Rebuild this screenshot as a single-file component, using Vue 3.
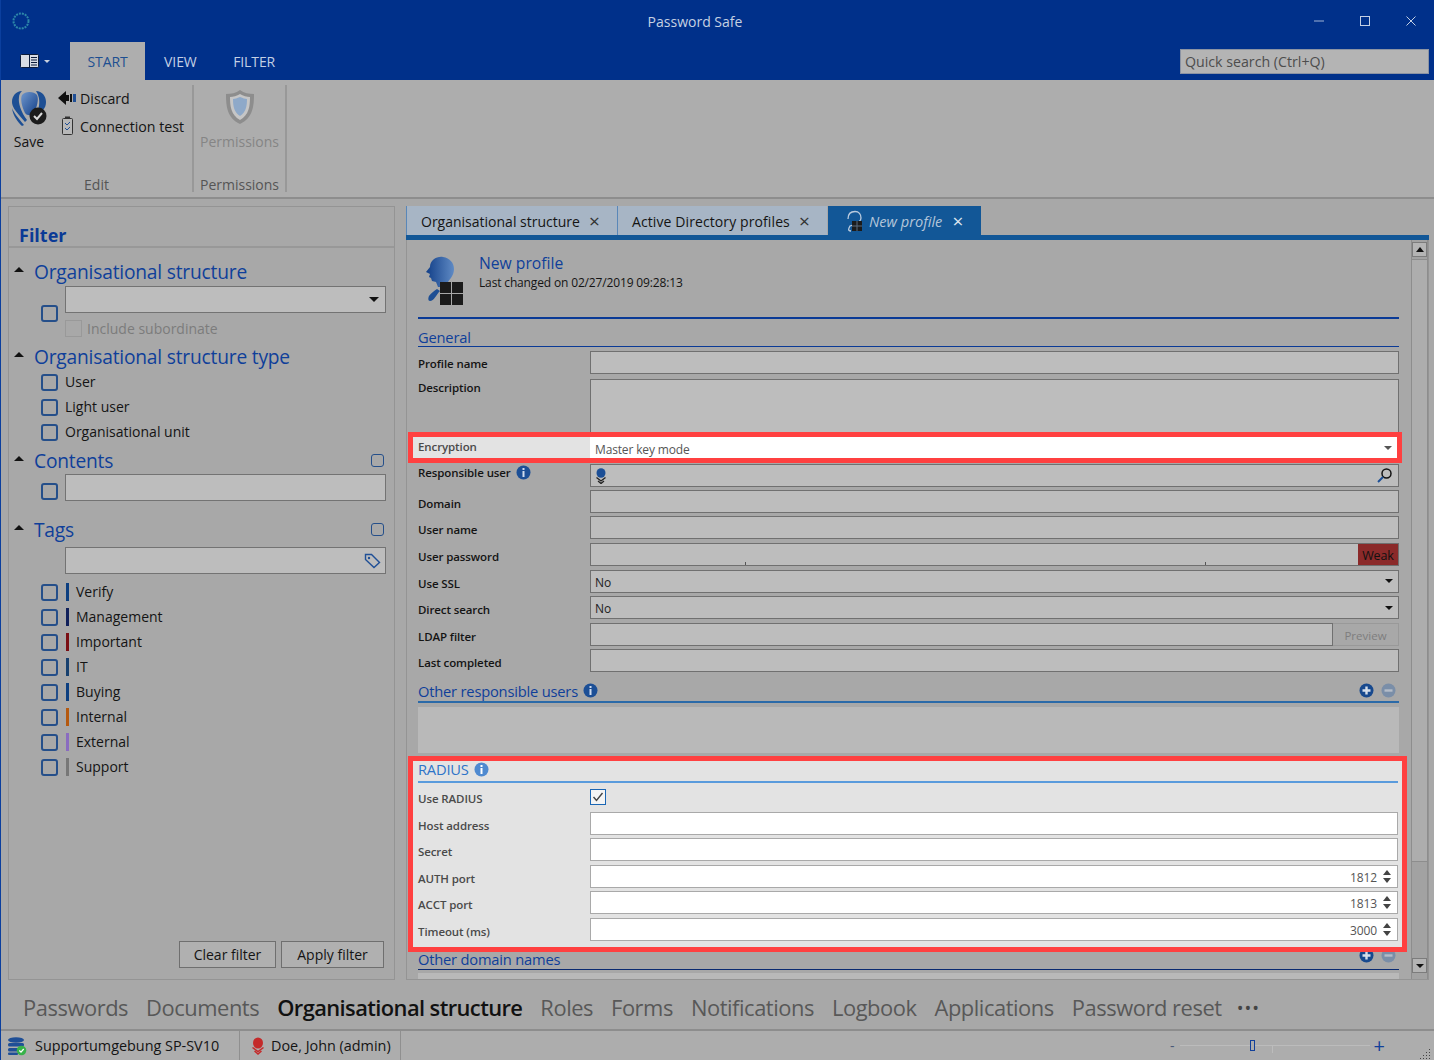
<script setup>
// donnees des listes du filtre et du formulaire
const typeList = ["User", "Light user", "Organisational unit"]
const tags = [
  { nom: "Verify", couleur: "#0d3f80" },
  { nom: "Management", couleur: "#10205a" },
  { nom: "Important", couleur: "#7a0f14" },
  { nom: "IT", couleur: "#17406e" },
  { nom: "Buying", couleur: "#0d3f80" },
  { nom: "Internal", couleur: "#b5590f" },
  { nom: "External", couleur: "#8a6cc0" },
  { nom: "Support", couleur: "#777777" }
]
const navItems = ["Passwords", "Documents", "Organisational structure", "Roles", "Forms", "Notifications", "Logbook", "Applications", "Password reset"]
const ports = [
  { label: "AUTH port", val: "1812" },
  { label: "ACCT port", val: "1813" },
  { label: "Timeout (ms)", val: "3000" }
]
</script>

<template>
  <div class="app">
    <div class="titlebar">
      <div class="logo">
        <svg width="20" height="20" viewBox="0 0 20 20"><circle cx="10" cy="10" r="7.5" fill="none" stroke="#2c86a8" stroke-width="2" stroke-dasharray="2 1"/></svg>
      </div>
      <div class="wintitle">Password Safe</div>
      <div class="winctrl">
        <span class="wbtn"><svg width="12" height="12" viewBox="0 0 12 12"><path d="M1 6h10" stroke="#9fb2d4" fill="none"/></svg></span>
        <span class="wbtn"><svg width="12" height="12" viewBox="0 0 12 12"><rect x="1.5" y="1.5" width="9" height="9" stroke="#c3cfe4" fill="none"/></svg></span>
        <span class="wbtn"><svg width="12" height="12" viewBox="0 0 12 12"><path d="M1.5 1.5l9 9M10.5 1.5l-9 9" stroke="#c3cfe4" fill="none"/></svg></span>
      </div>
    </div>

    <div class="tabrow">
      <div class="appmenu">
        <svg width="20" height="14" viewBox="0 0 20 14"><rect x="0.5" y="0.5" width="18" height="13" rx="1" fill="#d8dce4" stroke="#0b1b3a"/><path d="M9.5 1v12" stroke="#0b1b3a"/><path d="M11 3.5h6M11 6h6M11 8.500h6M11 11h6" stroke="#0b1b3a"/></svg>
        <span class="menu-caret"></span>
      </div>
      <div class="rtab active">START</div>
      <div class="rtab">VIEW</div>
      <div class="rtab">FILTER</div>
      <div class="quick">Quick search (Ctrl+Q)</div>
    </div>

    <div class="ribbon">
      <div class="rgroup edit">
        <div class="rgroup-body">
          <div class="bigbtn">
            <svg width="38" height="40" viewBox="0 0 38 40">
              <defs><linearGradient id="g1" x1="0" y1="0" x2="1" y2="1"><stop offset="0" stop-color="#6f96cc"/><stop offset="1" stop-color="#123f88"/></linearGradient></defs>
              <path d="M12 2C6 2 2 7 2 13c0 5 4 9 7 13l6 7 2-2c-6-8-9-17-8-23 0-2 1-4 3-6z" fill="#1d4f94"/>
              <path d="M2 19c2 5 6 10 12 17l-2 1C8 33 3 27 2 19z" fill="#1d4f94"/>
              <path d="M26 2c6 0 10 5 10 11 0 3-1 6-3 8h-5c2-6 2-13-2-19z" fill="#1d4f94"/>
              <path d="M12 6c3-4 12-4 15 0 2 4 0 12-3 18-2 3-7 3-9 0-3-6-5-14-3-18z" fill="url(#g1)"/>
              <circle cx="28" cy="27" r="8.500" fill="#1b1b1b"/>
              <path d="M24 27l3 3 5-6" stroke="#d8d8d8" stroke-width="2" fill="none"/>
            </svg>
            <span class="bigtxt">Save</span>
          </div>
          <div class="smallcol">
            <div class="smallbtn">
              <svg width="19" height="16" viewBox="0 0 19 16"><path d="M0 8l8-7v4h3v6H8v4z" fill="#111"/><rect x="12" y="4" width="2" height="8" fill="#111"/><rect x="15" y="4" width="3" height="8" fill="#1f4f96"/></svg>
              <span>Discard</span>
            </div>
            <div class="smallbtn">
              <svg width="19" height="20" viewBox="0 0 19 20"><rect x="4.500" y="2.500" width="10" height="16" rx="1" fill="#b8b8b8" stroke="#333"/><path d="M7 1.500h5" stroke="#333" stroke-width="2"/><path d="M7 7l2 2 3-3M7 12l2 2 3-3" stroke="#1f4f96" fill="none"/></svg>
              <span>Connection test</span>
            </div>
          </div>
        </div>
        <div class="rgroup-label">Edit</div>
      </div>
      <div class="rgroup perm">
        <div class="rgroup-body center">
          <div class="bigbtn dis">
            <svg width="32" height="38" viewBox="0 0 32 38"><path d="M16 2c4 3 9 4 14 4 0 12-1 24-14 30C3 30 2 18 2 6c5 0 10-1 14-4z" fill="#8d8d8d"/><path d="M16 6c3 2 7 3 10 3 0 9-1 18-10 23C7 27 6 18 6 9c3 0 7-1 10-3z" fill="#c6c6c6"/><path d="M16 9c3 1 5 2 7 2 0 7-1 13-7 17-6-4-7-10-7-17 2 0 4-1 7-2z" fill="#8ea9c9"/></svg>
            <span class="bigtxt">Permissions</span>
          </div>
        </div>
        <div class="rgroup-label">Permissions</div>
      </div>
    </div>

    <div class="middle">
      <aside class="filter">
        <div class="filter-title">Filter</div>

        <div class="fhead first"><span class="up"></span><span>Organisational structure</span></div>
        <div class="forg">
          <span class="cb big"></span>
          <div class="forg-col">
            <div class="finput"><span class="flex1"></span><span class="caret black"></span></div>
            <div class="incl"><span class="cb dis"></span><span>Include subordinate</span></div>
          </div>
        </div>

        <div class="fhead type"><span class="up"></span><span>Organisational structure type</span></div>
        <div v-for="t in typeList" :key="t" class="fitem"><span class="cb"></span><span>{{ t }}</span></div>

        <div class="fhead contents"><span class="up"></span><span class="flex1">Contents</span><span class="cb small"></span></div>
        <div class="fline"><span class="cb"></span><div class="finput"></div></div>

        <div class="fhead tagshead"><span class="up"></span><span class="flex1">Tags</span><span class="cb small"></span></div>
        <div class="tagbox">
          <div class="finput">
            <span class="flex1"></span>
            <svg width="17" height="16" viewBox="0 0 17 16"><path d="M1.500 1.500h6l8 8-5.500 5-8.500-8z" fill="none" stroke="#1f4f96" stroke-width="1.400"/><circle cx="5" cy="5" r="1.200" fill="#1f4f96"/></svg>
          </div>
        </div>
        <div v-for="t in tags" :key="t.nom" class="fitem">
          <span class="cb"></span>
          <span class="tagbar" :style="{ background: t.couleur }"></span>
          <span>{{ t.nom }}</span>
        </div>

        <div class="flex1"></div>
        <div class="fbtns">
          <div class="btn clear">Clear filter</div>
          <div class="btn apply">Apply filter</div>
        </div>
      </aside>

      <section class="main">
        <div class="doctabs">
          <div class="dtab one"><span>Organisational structure</span><span class="x">×</span></div>
          <div class="dtab two"><span>Active Directory profiles</span><span class="x">×</span></div>
          <div class="dtab cur">
            <svg width="18" height="22" viewBox="0 0 18 22"><path d="M3 9C3 4 6 1.500 10 1.500s6 3 6 6.500c0 2-1 3-2 4H8v3l-3 1-1 2c-1 2 0 3 2 3" fill="none" stroke="#b9cade" stroke-width="1.300"/><rect x="7" y="11" width="10" height="10" fill="#1b1b1b"/><path d="M12 11v10M7 16h10" stroke="#5b6b7c"/></svg>
            <span>New profile</span><span class="x">×</span>
          </div>
        </div>
        <div class="docbar"></div>

        <div class="docbody">
          <div class="form">
            <div class="phead">
              <svg class="picon" width="42" height="52" viewBox="0 0 42 52">
                <defs><linearGradient id="g2" x1="0" y1="0" x2="1" y2="0"><stop offset="0" stop-color="#123f88"/><stop offset="1" stop-color="#5f8ac4"/></linearGradient></defs>
                <path d="M6 12C6 5 13 1 19 2c7 1 11 6 11 12 0 6-4 10-6 13l-1 5h-9l-2-5-4-1-1-3-2-1 1-3-4-2z" fill="url(#g2)"/>
                <path d="M13 34l3 2c-4 4-6 10-10 10-2 0-2-3-1-5 2-3 5-5 8-7z" fill="#1e4f94"/>
                <rect x="16" y="27" width="11" height="11" fill="#1b1b1b"/><rect x="28" y="27" width="11" height="11" fill="#1b1b1b"/>
                <rect x="16" y="39" width="11" height="11" fill="#1b1b1b"/><rect x="28" y="39" width="11" height="11" fill="#1b1b1b"/>
              </svg>
              <div>
                <div class="ptitle">New profile</div>
                <div class="psub">Last changed on 02/27/2019 09:28:13</div>
              </div>
            </div>

            <div class="sect general"><span>General</span></div>
            <div class="row first"><label>Profile name</label><div class="inp"></div></div>
            <div class="row desc"><label>Description</label><div class="inp"></div></div>

            <div class="hl hl-enc">
              <div class="row enc"><label>Encryption</label><div class="inp white noborder"><span class="flex1">Master key mode</span><span class="caret grey"></span></div></div>
            </div>

            <div class="row resp">
              <label>Responsible user <svg class="info" width="15" height="15" viewBox="0 0 15 15"><circle cx="7.500" cy="7.500" r="7" fill="#1c4f96"/><rect x="6.500" y="3" width="2" height="2" fill="#cfdcee"/><rect x="6.500" y="6" width="2" height="6" fill="#cfdcee"/></svg></label>
              <div class="inp">
                <svg width="12" height="16" viewBox="0 0 12 16"><ellipse cx="6" cy="5" rx="4.500" ry="4.800" fill="#1c4f96"/><path d="M1.500 9.500L6 13l4.500-3.500M3 13l3 2.500L9 13" stroke="#222" stroke-width="1.300" fill="none"/></svg>
                <span class="flex1"></span>
                <svg width="17" height="17" viewBox="0 0 17 17"><circle cx="10.500" cy="6.500" r="4.500" fill="none" stroke="#111" stroke-width="1.500"/><path d="M7 10l-5 5" stroke="#1c4f96" stroke-width="2"/></svg>
              </div>
            </div>
            <div class="row"><label>Domain</label><div class="inp"></div></div>
            <div class="row"><label>User name</label><div class="inp"></div></div>
            <div class="row"><label>User password</label>
              <div class="inp pwd"><span class="tick t1"></span><span class="tick t2"></span><span class="flex1"></span><span class="weak">Weak</span></div>
            </div>
            <div class="row"><label>Use SSL</label><div class="inp"><span class="flex1">No</span><span class="caret black"></span></div></div>
            <div class="row"><label>Direct search</label><div class="inp"><span class="flex1">No</span><span class="caret black"></span></div></div>
            <div class="row"><label>LDAP filter</label><div class="ldap"><div class="inp grow"></div><div class="preview">Preview</div></div></div>
            <div class="row"><label>Last completed</label><div class="inp"></div></div>

            <div class="sect other">
              <span>Other responsible users</span>
              <svg class="info" width="15" height="15" viewBox="0 0 15 15"><circle cx="7.500" cy="7.500" r="7" fill="#1c4f96"/><rect x="6.500" y="3" width="2" height="2" fill="#cfdcee"/><rect x="6.500" y="6" width="2" height="6" fill="#cfdcee"/></svg>
              <span class="flex1"></span>
              <svg class="pm" width="15" height="15" viewBox="0 0 15 15"><circle cx="7.500" cy="7.500" r="7" fill="#17498e"/><path d="M3.500 7.500h8M7.500 3.500v8" stroke="#d5deea" stroke-width="2.400"/></svg>
              <svg class="pm" width="15" height="15" viewBox="0 0 15 15"><circle cx="7.500" cy="7.500" r="7" fill="#7a8ea8"/><path d="M3.500 7.500h8" stroke="#b4bcc8" stroke-width="2.400"/></svg>
            </div>
            <div class="listbox"></div>

            <div class="hl hl-radius">
              <div class="sect radius">
                <span>RADIUS</span>
                <svg class="info" width="15" height="15" viewBox="0 0 15 15"><circle cx="7.500" cy="7.500" r="7" fill="#4f8ad0"/><rect x="6.500" y="3" width="2" height="2" fill="#fff"/><rect x="6.500" y="6" width="2" height="6" fill="#fff"/></svg>
              </div>
              <div class="row light"><label>Use RADIUS</label>
                <div class="checked"><svg width="14" height="14" viewBox="0 0 14 14"><path d="M2.500 7l3 3.500 6-7.500" stroke="#444" stroke-width="1.400" fill="none"/></svg></div>
              </div>
              <div class="row light"><label>Host address</label><div class="inp white"></div></div>
              <div class="row light"><label>Secret</label><div class="inp white"></div></div>
              <div v-for="p in ports" :key="p.label" class="row light">
                <label>{{ p.label }}</label>
                <div class="inp white">
                  <span class="flex1 num">{{ p.val }}</span>
                  <span class="spin"><span class="sup"></span><span class="sdown"></span></span>
                </div>
              </div>
            </div>

            <div class="sect domains">
              <span>Other domain names</span>
              <span class="flex1"></span>
              <svg class="pm" width="15" height="15" viewBox="0 0 15 15"><circle cx="7.500" cy="7.500" r="7" fill="#17498e"/><path d="M3.500 7.500h8M7.500 3.500v8" stroke="#d5deea" stroke-width="2.400"/></svg>
              <svg class="pm" width="15" height="15" viewBox="0 0 15 15"><circle cx="7.500" cy="7.500" r="7" fill="#7a8ea8"/><path d="M3.500 7.500h8" stroke="#b4bcc8" stroke-width="2.400"/></svg>
            </div>
            <div class="listbox last"></div>
          </div>

          <div class="scroll">
            <div class="sbtn"><span class="up"></span></div>
            <div class="thumb"></div>
            <div class="flex1"></div>
            <div class="sbtn"><span class="caret black"></span></div>
          </div>
        </div>
      </section>
    </div>

    <nav class="bottomnav">
      <span v-for="n in navItems" :key="n" :class="{ on: n === 'Organisational structure' }">{{ n }}</span>
      <span class="dots">•••</span>
    </nav>

    <footer class="status">
      <div class="stat one">
        <svg width="20" height="20" viewBox="0 0 20 20"><ellipse cx="9" cy="4" rx="8" ry="2.800" fill="#1f4f96"/><rect x="1" y="7" width="16" height="3.500" rx="1.500" fill="#1f4f96"/><rect x="1" y="12" width="16" height="3.500" rx="1.500" fill="#1f4f96"/><rect x="1" y="16.500" width="10" height="2.500" rx="1" fill="#1f4f96"/><circle cx="14.500" cy="14.500" r="4.800" fill="#37b24a"/><path d="M12.300 14.500l1.700 1.700 2.700-3.200" stroke="#fff" stroke-width="1.200" fill="none"/></svg>
        <span>Supportumgebung SP-SV10</span>
      </div>
      <div class="stat two">
        <svg width="12" height="18" viewBox="0 0 12 18"><ellipse cx="6" cy="6" rx="5" ry="5.500" fill="#c42a2a"/><path d="M0.500 10.500L6 14.500l5.500-4M2.500 14L6 17l3.500-3" stroke="#c42a2a" stroke-width="1.500" fill="none"/></svg>
        <span>Doe, John (admin)</span>
      </div>
      <div class="flex1"></div>
      <div class="zoom">
        <span class="zminus">-</span>
        <div class="ztrack"><span class="zthumb"></span><span class="ztick"></span></div>
        <span class="zplus">+</span>
      </div>
      <svg class="grip" width="12" height="12" viewBox="0 0 12 12"><path d="M10 2h1v1h-1zM7 5h1v1H7zM10 5h1v1h-1zM4 8h1v1H4zM7 8h1v1H7zM10 8h1v1h-1zM1 11h1v1H1zM4 11h1v1H4zM7 11h1v1H7zM10 11h1v1h-1z" fill="#444"/></svg>
    </footer>
  </div>
</template>

<style>
body { margin: 0; background: #a8a8a8; }
</style>

<style scoped>
.app {
  width: 1434px;
  height: 1060px;
  display: flex;
  flex-direction: column;
  overflow: hidden;
  background: #a8a8a8;
  border-left: 1px solid #0b3f9e;
  box-sizing: border-box;
  font-family: "Open Sans", "Noto Sans", sans-serif;
  font-size: 14px;
  color: #141414;
}
.flex1 { flex: 1; }

/* barre de titre */
.titlebar {
  height: 42px;
  display: flex;
  align-items: center;
  background: #00308a;
  margin-left: -1px;
}
.logo { width: 94px; padding-left: 11px; box-sizing: border-box; display: flex; }
.wintitle { flex: 1; text-align: center; color: #c6d0e2; font-size: 14px; }
.winctrl { width: 138px; display: flex; }
.wbtn { width: 46px; display: flex; justify-content: center; }

.tabrow {
  height: 38px;
  display: flex;
  align-items: stretch;
  gap: 1.500px;
  background: #00308a;
  margin-left: -1px;
}
.appmenu { width: 70px; margin-right: -1.500px; display: flex; align-items: center; padding-left: 20px; box-sizing: border-box; gap: 4px; }
.menu-caret { width: 0; height: 0; border-left: 3px solid transparent; border-right: 3px solid transparent; border-top: 3px solid #c8d0de; }
.rtab { padding: 0 17.500px; display: flex; align-items: center; color: #c3cfe4; font-size: 14px; letter-spacing: -0.1px; }
.rtab.active { background: #aeaeae; color: #1d4f91; }
.quick {
  margin: 7px 5px 6px auto;
  width: 249px;
  box-sizing: border-box;
  background: #b4b4b4;
  border: 1px solid #8b93a3;
  color: #4d4d4d;
  padding: 0 4px;
  font-size: 14.200px;
  line-height: 23px;
}

/* ruban */
.ribbon {
  height: 119px;
  display: flex;
  background: #adadad;
  border-bottom: 2px solid #8d8d8d;
  box-sizing: border-box;
}
.rgroup { display: flex; flex-direction: column; position: relative; border-right: 2px solid #989898; margin: 5px 0 5px; }
.rgroup.edit { width: 193px; box-sizing: border-box; }
.rgroup.perm { width: 93px; box-sizing: border-box; }
.rgroup-body { flex: 1; display: flex; }
.rgroup-body.center { justify-content: center; }
.rgroup-label { height: 17px; line-height: 17px; text-align: center; color: #555; font-size: 14px; margin-bottom: -1px; }
.bigbtn { display: flex; flex-direction: column; align-items: center; padding: 4px 9px 0; }
.bigbtn.dis { padding: 0; padding-top: 3px; }
.bigtxt { line-height: 20px; margin-top: 3px; font-size: 14px; }
.bigbtn.dis .bigtxt { color: #858585; margin-top: 6px; }
.smallcol { display: flex; flex-direction: column; gap: 8px; padding-top: 3px; margin-left: 1px; }
.smallbtn { display: flex; align-items: center; gap: 3px; height: 20px; font-size: 14.200px; }

/* panneau filtre */
.middle { flex: 1; display: flex; padding: 7px 5px 11px 7px; gap: 11px; min-height: 0; }
.filter {
  width: 387px;
  box-sizing: border-box;
  border: 1px solid #949494;
  display: flex;
  flex-direction: column;
}
.filter-title {
  margin-top: 17px;
  padding-left: 10px;
  height: 22px;
  line-height: 22px;
  font-size: 18px;
  font-weight: 700;
  color: #0a3a96;
  border-bottom: 2px solid #989898;
}
.fhead {
  display: flex;
  align-items: center;
  height: 26px;
  box-sizing: border-box;
  padding-bottom: 2px;
  font-size: 19.200px;
  letter-spacing: -0.2px;
  color: #0f3f9a;
  padding-right: 10px;
}
.fhead.first { margin-top: 11px; }
.fhead.type { margin-top: 6px; margin-bottom: -1px; }
.fhead.contents { margin-top: 4px; }
.fhead.tagshead { margin-top: 16px; }
.up {
  width: 0; height: 0;
  border-left: 5px solid transparent;
  border-right: 5px solid transparent;
  border-bottom: 5px solid #111;
}
.fhead .up { margin: -3px 10px 0 5px; }
.forg { display: flex; align-items: flex-start; padding-left: 32px; padding-right: 8px; margin-top: 1px; }
.forg > .cb { margin-top: 19px; }
.forg-col { flex: 1; }
.cb {
  width: 17px; height: 17px;
  flex: none;
  box-sizing: border-box;
  border: 2px solid #254f8a;
  border-radius: 3px;
  margin-right: 7px;
}
.fitem .cb { margin-top: 2px; }
.fline .cb { margin-top: 8px; }
.cb.small { width: 13px; height: 13px; border-width: 1.500px; margin-right: 0; margin-top: 1px; }
.cb.dis { border: 1px solid #999; border-radius: 0; margin-right: 5px; }
.finput {
  flex: 1;
  height: 27px;
  box-sizing: border-box;
  background: #bdbdbd;
  border: 1px solid #737373;
  display: flex;
  align-items: center;
  padding-right: 6px;
}
.tagbox .finput { padding-right: 4px; }
.incl { display: flex; align-items: center; margin-top: 6px; color: #7c7c7c; font-size: 14px; }
.fitem { display: flex; align-items: center; height: 25px; padding-left: 32px; font-size: 14px; }
.fline { display: flex; align-items: center; padding-left: 32px; padding-right: 8px; }
.tagbox { display: flex; padding-left: 56px; padding-right: 8px; margin-top: 4px; margin-bottom: 5px; }
.tagbar { width: 3px; height: 18px; margin: 0 7px 0 1px; }
.caret { width: 0; height: 0; border-left: 4px solid transparent; border-right: 4px solid transparent; border-top: 4px solid #111; }
.fhead .caret, .finput .caret { border-left-width: 5px; border-right-width: 5px; border-top-width: 5px; }
.caret.grey { border-top-color: #555; }
.fbtns { display: flex; justify-content: flex-end; gap: 5px; padding: 0 10px 11px 0; }
.btn {
  height: 27px;
  box-sizing: border-box;
  border: 1px solid #6f6f6f;
  background: #b0b0b0;
  line-height: 25px;
  text-align: center;
  font-size: 14px;
}
.btn.clear { width: 97px; }
.btn.apply { width: 103px; }

/* onglets du document */
.main { flex: 1; min-width: 0; display: flex; flex-direction: column; }
.doctabs { display: flex; height: 29px; }
.dtab {
  display: flex;
  align-items: center;
  box-sizing: border-box;
  padding-left: 14px;
  background: #a7b5c5;
  border-left: 1px solid #5a87b8;
  font-size: 14px;
  padding-top: 1px;
}
.dtab.one { width: 211px; }
.dtab.two { width: 210px; letter-spacing: 0.1px; }
.dtab.cur { width: 153px; background: #125797; border-left: 0; color: #b4c6da; font-size: 14.600px; font-style: italic; margin-left: 1px; padding-left: 17px; gap: 6px; }
.x { font-size: 19px; font-style: normal; margin-left: 9px; line-height: 14px; color: #333; }
.dtab.cur .x { color: #dde5ef; margin-left: 4px; }
.docbar { height: 5px; background: #125797; }
.docbody {
  flex: 1;
  min-height: 0;
  display: flex;
  border: 1px solid #949494;
  border-top: 0;
  overflow: hidden;
}
.form { width: 981px; margin-left: 11px; flex: none; }
.phead { display: flex; align-items: flex-start; gap: 13px; height: 79px; padding-top: 14px; box-sizing: border-box; border-bottom: 2px solid #0a3a96; }
.picon { margin-left: 6px; margin-top: 1px; }
.ptitle { font-size: 15.700px; line-height: 20px; color: #0f3f9a; margin-top: -1px; }
.psub { font-size: 12px; line-height: 20px; letter-spacing: -0.15px; }
.sect {
  display: flex;
  align-items: center;
  gap: 5px;
  font-size: 14.700px;
  letter-spacing: -0.2px;
  color: #0f3f9a;
  border-bottom: 1px solid #0a3a96;
}
.sect.general { height: 28px; padding-top: 8px; box-sizing: border-box; }
.sect.other { height: 27px; border-bottom: 2px solid #2b6aa8; padding-top: 4px; box-sizing: border-box; margin-top: 2px; }
.sect.radius { height: 22px; box-sizing: border-box; padding-bottom: 4px; color: #2e74c8; border-bottom: 2px solid #5a9bdc; }
.sect.domains { height: 18px; box-sizing: border-box; padding-bottom: 3px; margin-top: 0; border-bottom-color: #0a2a70; }
.sect.domains .pm { margin-top: -8px; }
.pm { margin-right: 1px; }
.pm + .pm { margin-left: 1px; margin-right: 3px; }
.row {
  display: grid;
  grid-template-columns: 172px 1fr;
  align-items: center;
  height: 26.600px;
}
.row.first { margin-top: 2px; }
.row label {
  font-size: 11.500px;
  font-weight: 600;
  letter-spacing: -0.1px;
  display: flex;
  align-items: center;
  gap: 5px;
  padding-top: 4px;
}
.row.first label { padding-top: 2px; }
.row.desc { height: 56.500px; align-items: start; padding-top: 3px; box-sizing: border-box; }
.row.desc label { padding-top: 1px; }
.row.desc .inp { height: 54px; }
.row.resp { height: 25px; }
.row.resp label { margin-top: -6px; padding-top: 0; }
.inp {
  height: 23px;
  box-sizing: border-box;
  background: #bdbdbd;
  border: 1px solid #707070;
  display: flex;
  align-items: center;
  padding: 2px 5px 0 4px;
  font-size: 12px;
  letter-spacing: -0.1px;
  color: #1c1c1c;
}
.inp .caret, .inp svg, .inp .spin { margin-top: -2px; }
.inp.white { background: #fff; border-color: #a9a9a9; }
.inp.noborder { border: 0; color: #555; height: 21px; letter-spacing: -0.15px; padding-left: 5px; padding-top: 3px; }
.inp.grow { flex: 1; }
.inp.pwd { padding: 0; position: relative; }
.tick { position: absolute; bottom: 0; width: 1px; height: 3px; background: #555; }
.t1 { left: 154px; }
.t2 { left: 614px; }
.weak { background: #8b2a2a; color: #111; width: 40px; height: 100%; line-height: 23px; text-align: center; font-size: 12.500px; }
.ldap { display: flex; }
.preview {
  width: 66px;
  height: 23px;
  box-sizing: border-box;
  border: 1px solid #999;
  border-left: 0;
  color: #7e7e7e;
  font-size: 11.500px;
  line-height: 23px;
  text-align: center;
}
.listbox { height: 46px; background: #b9b9b9; margin-top: 4px; }
.listbox.last { margin-top: 3px; height: 30px; }

/* zones en rouge */
.hl {
  border: 5px solid #ff4040;
  background: #e3e3e3;
  position: relative;
  z-index: 1;
  box-sizing: border-box;
}
.hl-enc { margin: 0 -3px 0 -10px; padding-left: 5px; height: 31px; }
.row.enc { height: 21px; }
.row.enc label { color: #4a4a4a; margin-top: -3px; padding-top: 0; }
.hl-radius { margin: 3px -8px 0 -10px; padding: 0 4px 0 5px; height: 196px; border-bottom-width: 5px; }
.row.light label { color: #4a4a4a; }
.checked {
  width: 14px; height: 14px;
  border: 1px solid #1a66b4;
  background: #f4f4f4;
  display: flex;
}
.num { text-align: right; padding-right: 3px; color: #555; }
.spin { display: flex; flex-direction: column; gap: 3px; padding: 0 1px 0 3px; }
.sup, .sdown { width: 0; height: 0; border-left: 4px solid transparent; border-right: 4px solid transparent; }
.sup { border-bottom: 5px solid #444; }
.sdown { border-top: 5px solid #444; }

/* ascenseur */
.scroll {
  width: 17px;
  margin-left: 12px;
  background: #a2a2a2;
  border-left: 1px solid #8d8d8d;
  border-right: 1px solid #8d8d8d;
  box-sizing: border-box;
  display: flex;
  flex-direction: column;
  padding: 2px 0 6px;
}
.sbtn { height: 15px; flex: none; background: #b4b4b4; border: 1px solid #7c7c7c; box-sizing: border-box; display: flex; align-items: center; justify-content: center; }
.sbtn .up { border-left-width: 4px; border-right-width: 4px; }
.thumb { height: 603px; margin-top: 2px; background: #adadad; border: 1px solid #8d8d8d; border-left: 0; border-right: 0; box-sizing: border-box; }

/* navigation du bas */
.bottomnav {
  height: 40px;
  flex: none;
  display: flex;
  align-items: center;
  gap: 18px;
  padding: 0 0 5px 22px;
  font-size: 21.900px;
  letter-spacing: -0.45px;
  color: #585858;
  box-sizing: border-box;
  border-bottom: 2px solid #8d8d8d;
}
.bottomnav .on { color: #111; font-weight: 600; letter-spacing: -0.6px; }
.dots { font-size: 18px; letter-spacing: 1px; margin-left: -3px; color: #444; }

/* barre d'etat */
.status {
  height: 29px;
  flex: none;
  display: flex;
  align-items: center;
  background: #adadad;
  font-size: 14.400px;
}
.stat { height: 100%; display: flex; align-items: center; border-right: 1px solid #8f8f8f; box-sizing: border-box; }
.stat.one { width: 239px; padding-left: 6px; gap: 8px; }
.stat.two { width: 161px; padding-left: 12px; gap: 7px; }
.zoom { display: flex; align-items: center; margin-right: 36px; color: #12409a; }
.zminus { font-size: 14px; color: #4a5a78; }
.zplus { font-size: 20px; line-height: 20px; margin-left: 4px; }
.ztrack { width: 190px; height: 1px; background: #bcbcbc; margin-left: 5px; display: flex; align-items: center; padding-left: 70px; box-sizing: border-box; }
.zthumb { width: 5px; height: 11px; flex: none; border: 1px solid #12409a; background: #adadad; box-sizing: border-box; }
.ztick { width: 1px; height: 7px; margin: 7px 0 0 17px; background: #bcbcbc; flex: none; }
.grip { margin: 14px 3px 0 -2px; }
</style>
